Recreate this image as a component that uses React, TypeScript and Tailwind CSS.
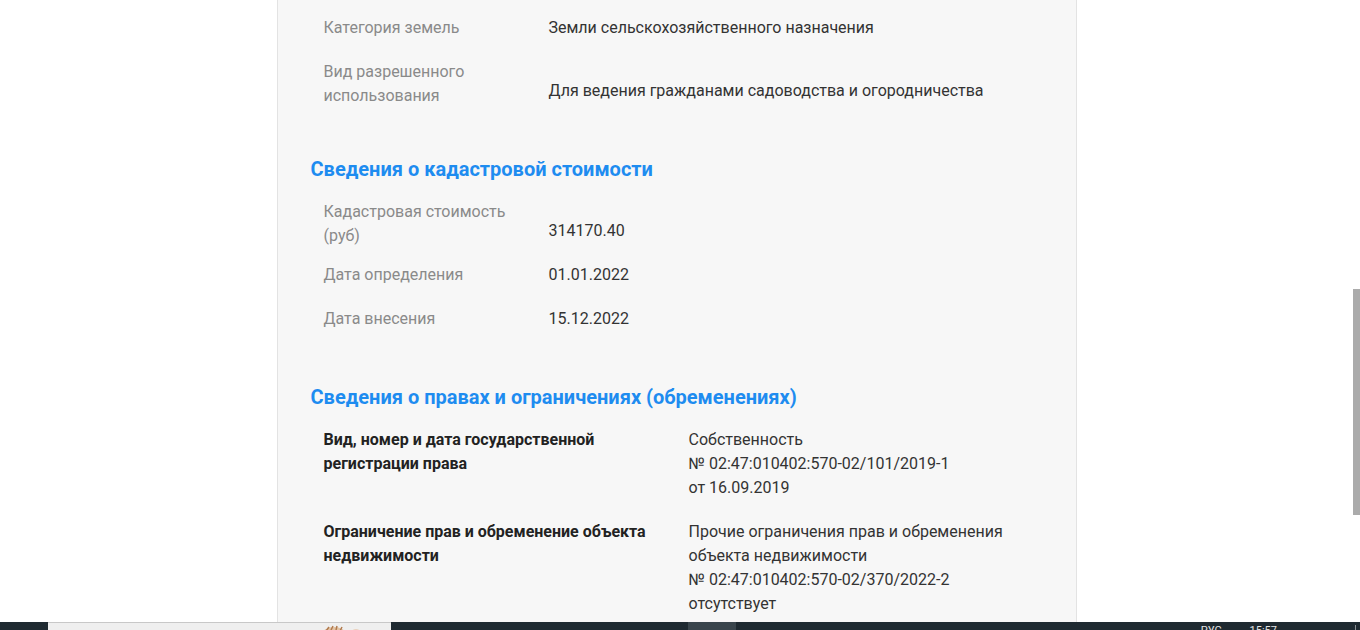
import React from "react";

type Row = { label: string[]; value: string[]; top: string; shift?: boolean };

const firstRows: Row[] = [
  { label: ["Категория земель"], value: ["Земли сельскохозяйственного назначения"], top: "mt-0" },
  {
    label: ["Вид разрешенного", "использования"],
    value: ["Для ведения гражданами садоводства и огородничества"],
    top: "mt-[20px]",
    shift: true,
  },
];

const costRows: Row[] = [
  { label: ["Кадастровая стоимость", "(руб)"], value: ["314170.40"], top: "mt-[17px]", shift: true },
  { label: ["Дата определения"], value: ["01.01.2022"], top: "mt-[15px]" },
  { label: ["Дата внесения"], value: ["15.12.2022"], top: "mt-[20px]" },
];

const rightsRows: Row[] = [
  {
    label: ["Вид, номер и дата государственной", "регистрации права"],
    value: ["Собственность", "№ 02:47:010402:570-02/101/2019-1", "от 16.09.2019"],
    top: "mt-[17px]",
  },
  {
    label: ["Ограничение прав и обременение объекта", "недвижимости"],
    value: [
      "Прочие ограничения прав и обременения",
      "объекта недвижимости",
      "№ 02:47:010402:570-02/370/2022-2",
      "отсутствует",
    ],
    top: "mt-[20px]",
  },
];

function InfoRow({ row }: { row: Row }) {
  return (
    <div className={`flex pl-[13px] ${row.top}`}>
      <div className="w-[225px] shrink-0 text-[#8a8a8a]">
        {row.label.map((l) => (
          <div key={l}>{l}</div>
        ))}
      </div>
      <div className={`text-[#333333] ${row.shift ? "mt-[19px]" : ""}`}>
        {row.value.map((v) => (
          <div key={v}>{v}</div>
        ))}
      </div>
    </div>
  );
}

function RightsRow({ row }: { row: Row }) {
  return (
    <div className={`flex pl-[13px] ${row.top}`}>
      <div className="w-[365px] shrink-0 font-bold text-[#222222]">
        {row.label.map((l) => (
          <div key={l}>{l}</div>
        ))}
      </div>
      <div className="text-[#333333]">
        {row.value.map((v) => (
          <div key={v}>{v}</div>
        ))}
      </div>
    </div>
  );
}

function Heading({ children, top }: { children: React.ReactNode; top: string }) {
  return (
    <h2 className={`${top} text-[20px] leading-[28px] font-bold text-[#1e8cf0]`}>{children}</h2>
  );
}

export default function App() {
  return (
    <div
      className="h-[630px] w-[1360px] overflow-hidden bg-white flex flex-col"
      style={{ fontFamily: "Roboto, 'Liberation Sans', sans-serif" }}
    >
      <div className="flex h-[622px]">
        <div className="flex-1 flex justify-center">
          <div className="w-[800px] h-full bg-[#f7f7f7] border-x border-[#e3e3e3] pl-[33px] pt-[16px] text-[16px] leading-[24px]">
            {firstRows.map((r) => (
              <InfoRow key={r.label[0]} row={r} />
            ))}

            <Heading top="mt-[47px]">Сведения о кадастровой стоимости</Heading>
            {costRows.map((r) => (
              <InfoRow key={r.label[0]} row={r} />
            ))}

            <Heading top="mt-[52px]">Сведения о правах и ограничениях (обременениях)</Heading>
            {rightsRows.map((r) => (
              <RightsRow key={r.label[0]} row={r} />
            ))}
          </div>
        </div>
        <div className="w-[7px] pt-[289px]">
          <div className="h-[226px] bg-[#ababab]" />
        </div>
      </div>

      {/* taskbar */}
      <div className="h-[8px] bg-[#1f2a31] flex overflow-hidden">
        <div className="w-[48px]" />
        <div className="w-[343px] bg-[#efefef] border-t border-[#c8c8c8] flex">
          <svg className="ml-[272px] mt-[2px]" width="44" height="12" viewBox="0 0 44 12">
            <ellipse cx="14" cy="10" rx="12" ry="8" fill="#e3c3a3" />
            <path d="M6 6 L9 2 M11 5 L13 1 M16 5 L17 1 M20 6 L22 2" stroke="#b07a4e" strokeWidth="1.5" />
            <ellipse cx="36" cy="10" rx="6" ry="6" fill="#ead2bd" />
          </svg>
        </div>
        <div className="w-[297px]" />
        <div className="w-[48px] bg-[#3a454c]" />
        <div className="flex-1 flex justify-end text-[11px] leading-[12px] text-[#e6e6e6] pt-[3px]">
          <span className="mr-[28px]">РУС</span>
          <span className="mr-[78px]">15:57</span>
          <div className="w-px bg-[#8a8f93]" />
          <div className="w-[4px]" />
        </div>
      </div>
    </div>
  );
}
